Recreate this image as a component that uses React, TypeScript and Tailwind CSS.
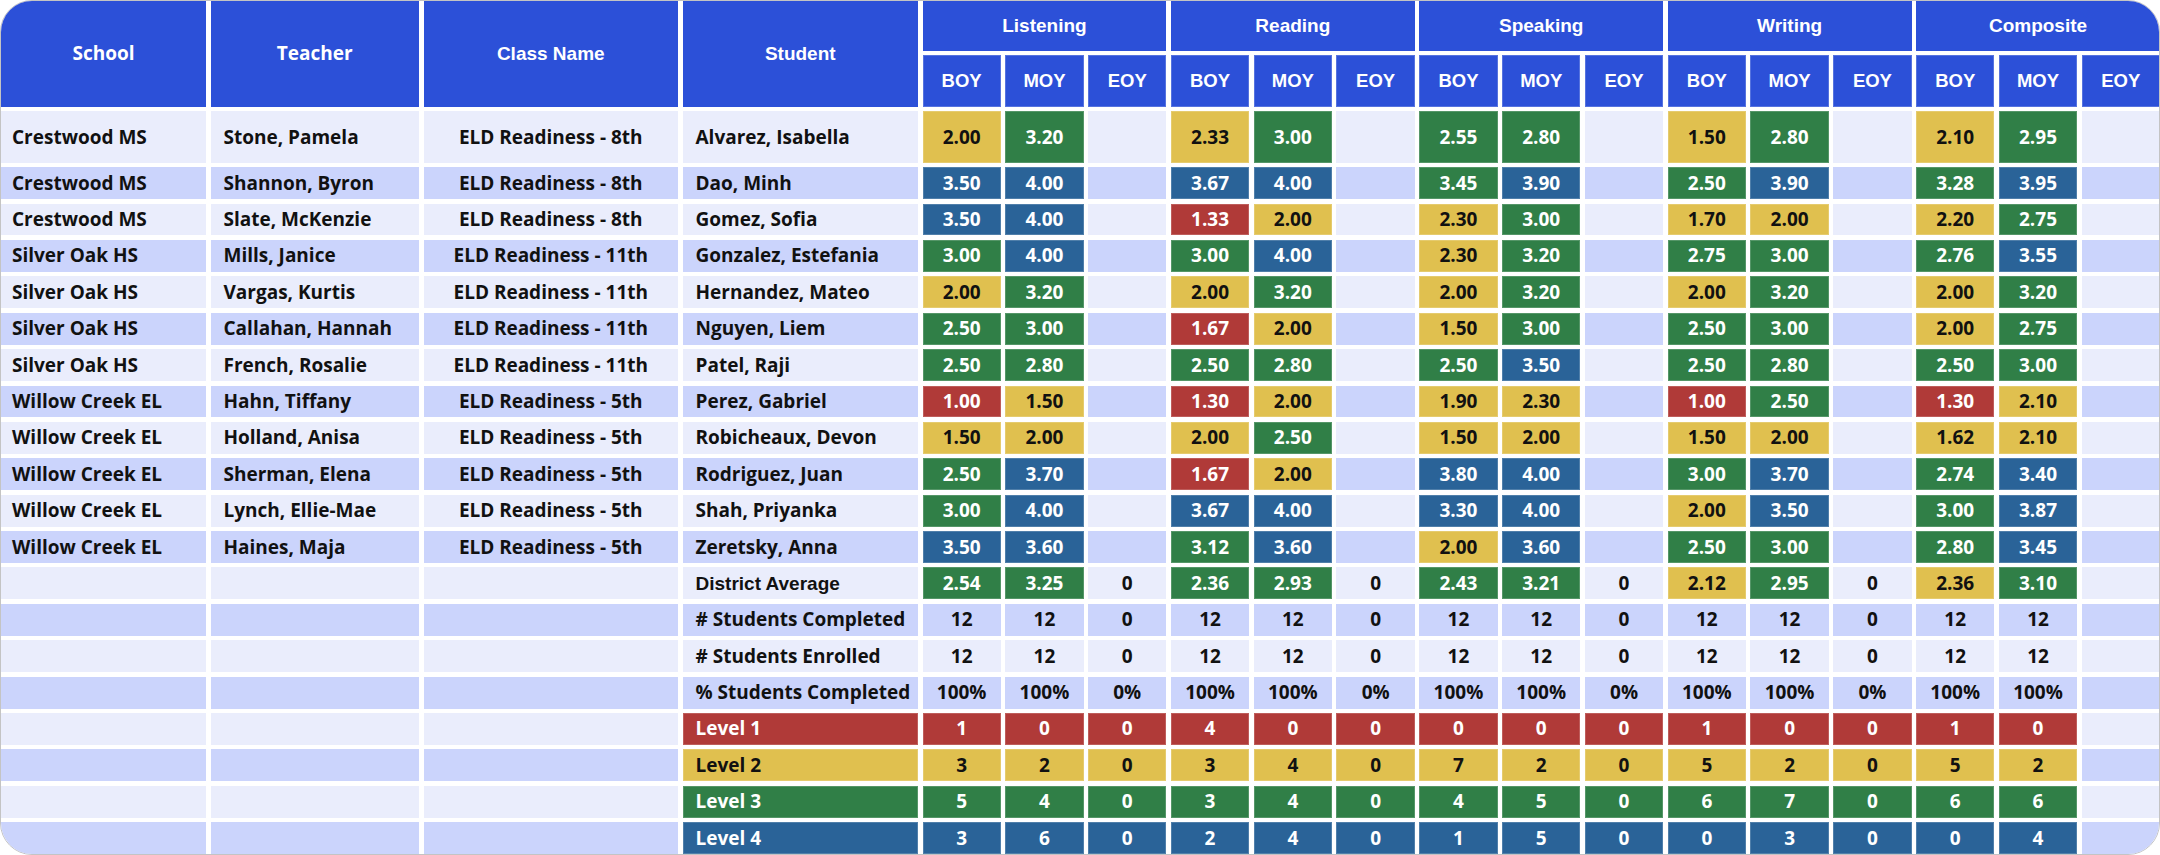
import React from "react";

type C = "R" | "Y" | "G" | "B" | "";

const OS = "font-['Open_Sans',sans-serif]";
const AR = "font-['Liberation_Sans',Arial,sans-serif]";

const colorCls: Record<string, string> = {
  R: "bg-[#b03a38] text-white shadow-[inset_0_0_0_1px_rgba(255,255,255,0.18)]",
  Y: "bg-[#e0c04f] text-[#111] shadow-[inset_0_0_0_1px_rgba(255,255,255,0.18)]",
  G: "bg-[#307f47] text-white shadow-[inset_0_0_0_1px_rgba(255,255,255,0.18)]",
  B: "bg-[#2a6398] text-white shadow-[inset_0_0_0_1px_rgba(255,255,255,0.18)]",
};

const rows: [string, string, string, string, string][] = [
  ["Crestwood MS", "Stone, Pamela", "ELD Readiness - 8th", "Alvarez, Isabella", "2.00Y 3.20G 2.33Y 3.00G 2.55G 2.80G 1.50Y 2.80G 2.10Y 2.95G"],
  ["Crestwood MS", "Shannon, Byron", "ELD Readiness - 8th", "Dao, Minh", "3.50B 4.00B 3.67B 4.00B 3.45G 3.90B 2.50G 3.90B 3.28G 3.95B"],
  ["Crestwood MS", "Slate, McKenzie", "ELD Readiness - 8th", "Gomez, Sofia", "3.50B 4.00B 1.33R 2.00Y 2.30Y 3.00G 1.70Y 2.00Y 2.20Y 2.75G"],
  ["Silver Oak HS", "Mills, Janice", "ELD Readiness - 11th", "Gonzalez, Estefania", "3.00G 4.00B 3.00G 4.00B 2.30Y 3.20G 2.75G 3.00G 2.76G 3.55B"],
  ["Silver Oak HS", "Vargas, Kurtis", "ELD Readiness - 11th", "Hernandez, Mateo", "2.00Y 3.20G 2.00Y 3.20G 2.00Y 3.20G 2.00Y 3.20G 2.00Y 3.20G"],
  ["Silver Oak HS", "Callahan, Hannah", "ELD Readiness - 11th", "Nguyen, Liem", "2.50G 3.00G 1.67R 2.00Y 1.50Y 3.00G 2.50G 3.00G 2.00Y 2.75G"],
  ["Silver Oak HS", "French, Rosalie", "ELD Readiness - 11th", "Patel, Raji", "2.50G 2.80G 2.50G 2.80G 2.50G 3.50B 2.50G 2.80G 2.50G 3.00G"],
  ["Willow Creek EL", "Hahn, Tiffany", "ELD Readiness - 5th", "Perez, Gabriel", "1.00R 1.50Y 1.30R 2.00Y 1.90Y 2.30Y 1.00R 2.50G 1.30R 2.10Y"],
  ["Willow Creek EL", "Holland, Anisa", "ELD Readiness - 5th", "Robicheaux, Devon", "1.50Y 2.00Y 2.00Y 2.50G 1.50Y 2.00Y 1.50Y 2.00Y 1.62Y 2.10Y"],
  ["Willow Creek EL", "Sherman, Elena", "ELD Readiness - 5th", "Rodriguez, Juan", "2.50G 3.70B 1.67R 2.00Y 3.80B 4.00B 3.00G 3.70B 2.74G 3.40B"],
  ["Willow Creek EL", "Lynch, Ellie-Mae", "ELD Readiness - 5th", "Shah, Priyanka", "3.00G 4.00B 3.67B 4.00B 3.30B 4.00B 2.00Y 3.50B 3.00G 3.87B"],
  ["Willow Creek EL", "Haines, Maja", "ELD Readiness - 5th", "Zeretsky, Anna", "3.50B 3.60B 3.12G 3.60B 2.00Y 3.60B 2.50G 3.00G 2.80G 3.45B"],
];

type Footer = { label: string; labelFont: string; color: C; values: [string, C][] };

const plain = (vals: string[]): [string, C][] => vals.map((v) => [v, ""]);

const footers: Footer[] = [
  {
    label: "District Average",
    labelFont: AR,
    color: "",
    values: [
      ["2.54", "G"], ["3.25", "G"], ["0", ""],
      ["2.36", "G"], ["2.93", "G"], ["0", ""],
      ["2.43", "G"], ["3.21", "G"], ["0", ""],
      ["2.12", "Y"], ["2.95", "G"], ["0", ""],
      ["2.36", "Y"], ["3.10", "G"], ["", ""],
    ],
  },
  { label: "# Students Completed", labelFont: OS, color: "", values: plain(["12", "12", "0", "12", "12", "0", "12", "12", "0", "12", "12", "0", "12", "12", ""]) },
  { label: "# Students Enrolled", labelFont: OS, color: "", values: plain(["12", "12", "0", "12", "12", "0", "12", "12", "0", "12", "12", "0", "12", "12", ""]) },
  { label: "% Students Completed", labelFont: OS, color: "", values: plain(["100%", "100%", "0%", "100%", "100%", "0%", "100%", "100%", "0%", "100%", "100%", "0%", "100%", "100%", ""]) },
];

const levels: [string, C, string[]][] = [
  ["Level 1", "R", ["1", "0", "0", "4", "0", "0", "0", "0", "0", "1", "0", "0", "1", "0"]],
  ["Level 2", "Y", ["3", "2", "0", "3", "4", "0", "7", "2", "0", "5", "2", "0", "5", "2"]],
  ["Level 3", "G", ["5", "4", "0", "3", "4", "0", "4", "5", "0", "6", "7", "0", "6", "6"]],
  ["Level 4", "B", ["3", "6", "0", "2", "4", "0", "1", "5", "0", "0", "3", "0", "0", "4"]],
];

for (const [label, c, vals] of levels) {
  const v: [string, C][] = vals.map((x) => [x, c] as [string, C]);
  v.push(["", ""]);
  footers.push({ label, labelFont: OS, color: c, values: v });
}

const rowBg = (i: number) => (i % 2 === 0 ? "bg-[#eaedfc]" : "bg-[#cbd4fc]");

function Head({ children, className = "", font = AR }: { children?: React.ReactNode; className?: string; font?: string }) {
  return (
    <div className={`bg-[#2c50d8] text-white flex items-center justify-center font-bold text-[19px] ${font} ${className}`}>
      {children}
    </div>
  );
}

function ValueCell({ v, c, bg }: { v: string; c: C; bg: string }) {
  const cls = c ? colorCls[c] : `${bg} text-[#111]`;
  return (
    <div className={`flex items-center justify-center font-bold text-[19px] ${OS} ${cls}`}>{v}</div>
  );
}

export default function App() {
  const groups = ["Listening", "Reading", "Speaking", "Writing", "Composite"];
  let rowIndex = 0;
  return (
    <div className="w-[2160px] h-[855px] bg-white">
      <div className="w-[2160px] h-[855px] rounded-[32px] border border-[#c4c4c4] overflow-hidden bg-white">
        <div className="grid grid-cols-[205px_208.5px_254.5px_235.5px_repeat(15,78.3px)] grid-rows-[49.7px_51.7px_51.3px_repeat(19,31.9px)] gap-[4.5px] leading-none">
          <Head className="row-span-2" font={OS}>School</Head>
          <Head className="row-span-2" font={OS}>Teacher</Head>
          <Head className="row-span-2">Class Name</Head>
          <Head className="row-span-2">Student</Head>
          {groups.map((g) => (
            <Head key={g} className="col-span-3">{g}</Head>
          ))}
          {groups.map((g) =>
            ["BOY", "MOY", "EOY"].map((p) => (
              <div
                key={g + p}
                className={`bg-[#2c50d8] text-white flex items-center justify-center font-bold text-[18.5px] shadow-[inset_0_0_0_1px_rgba(255,255,255,0.2)] ${AR}`}
              >
                {p}
              </div>
            ))
          )}
          {rows.map((r, i) => {
            const bg = rowBg(rowIndex++);
            const vals = r[4].split(" ");
            const cells: [string, C][] = [];
            for (let k = 0; k < 5; k++) {
              const a = vals[k * 2];
              const b = vals[k * 2 + 1];
              cells.push([a.slice(0, -1), a.slice(-1) as C]);
              cells.push([b.slice(0, -1), b.slice(-1) as C]);
              cells.push(["", ""]);
            }
            return (
              <React.Fragment key={i}>
                <div className={`${bg} flex items-center pl-[11px] font-bold text-[19px] text-[#111] ${OS}`}>{r[0]}</div>
                <div className={`${bg} flex items-center pl-[13px] font-bold text-[19px] text-[#111] ${OS}`}>{r[1]}</div>
                <div className={`${bg} flex items-center justify-center font-bold text-[19px] text-[#111] ${OS}`}>{r[2]}</div>
                <div className={`${bg} flex items-center pl-[13px] font-bold text-[19px] text-[#111] ${OS}`}>{r[3]}</div>
                {cells.map(([v, c], j) => (
                  <ValueCell key={j} v={v} c={c} bg={bg} />
                ))}
              </React.Fragment>
            );
          })}
          {footers.map((f, i) => {
            const bg = rowBg(rowIndex++);
            const labelCls = f.color ? colorCls[f.color] : `${bg} text-[#111]`;
            return (
              <React.Fragment key={"f" + i}>
                <div className={bg} />
                <div className={bg} />
                <div className={bg} />
                <div className={`${labelCls} flex items-center pl-[13px] font-bold text-[19px] whitespace-nowrap ${f.labelFont}`}>
                  {f.label}
                </div>
                {f.values.map(([v, c], j) => (
                  <ValueCell key={j} v={v} c={c} bg={bg} />
                ))}
              </React.Fragment>
            );
          })}
        </div>
      </div>
    </div>
  );
}
